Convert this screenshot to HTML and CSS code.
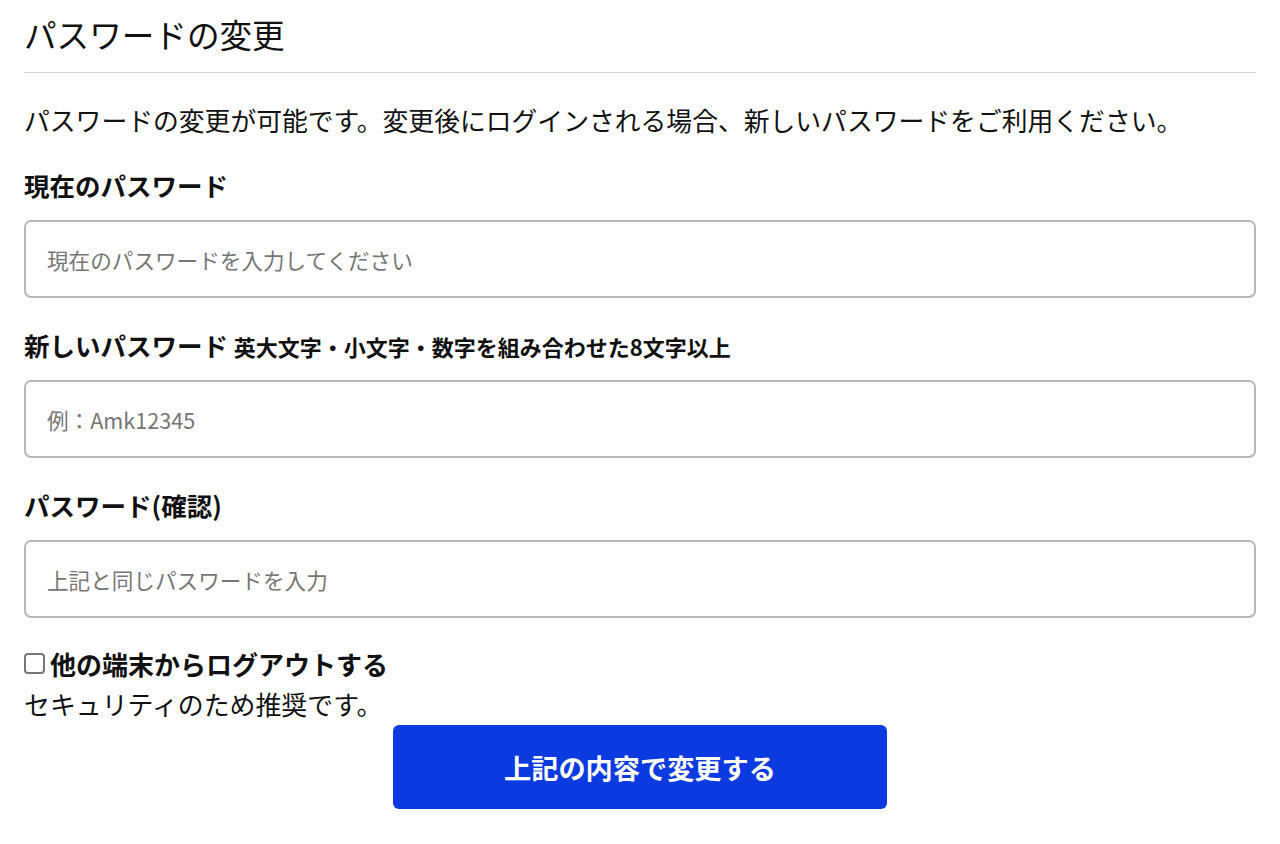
FILE: index.html
```html
<!DOCTYPE html>
<html lang="ja">
<head>
<meta charset="utf-8">
<title>パスワードの変更</title>
<link rel="stylesheet" href="styles.css">
</head>
<body>
<main class="page">
  <h1 class="title">パスワードの変更</h1>
  <p class="lead">パスワードの変更が可能です。変更後にログインされる場合、新しいパスワードをご利用ください。</p>
  <form class="form">
    <div class="field">
      <label class="label" for="current">現在のパスワード</label>
      <input class="input" id="current" type="password" placeholder="現在のパスワードを入力してください">
    </div>
    <div class="field">
      <label class="label" for="newpw">新しいパスワード <span class="hint">英大文字・小文字・数字を組み合わせた8文字以上</span></label>
      <input class="input" id="newpw" type="password" placeholder="例：Amk12345">
    </div>
    <div class="field">
      <label class="label" for="confirm">パスワード(確認)</label>
      <input class="input" id="confirm" type="password" placeholder="上記と同じパスワードを入力">
    </div>
    <div class="logout">
      <label class="check-label"><input class="check" type="checkbox">他の端末からログアウトする</label>
      <p class="note">セキュリティのため推奨です。</p>
    </div>
    <div class="actions">
      <button class="submit" type="button">上記の内容で変更する</button>
    </div>
  </form>
</main>
</body>
</html>
```

FILE: styles.css
```css
* { box-sizing: border-box; }
html, body { margin: 0; padding: 0; background: #fff; }
body {
  font-family: "Noto Sans CJK JP", "Noto Sans", sans-serif;
  color: #111;
}
.page {
  padding: 0 24px;
}
.title {
  margin: 0;
  padding: 10px 0 14px;
  font-size: 32.6px;
  line-height: 48px;
  font-weight: 400;
  border-bottom: 1.5px solid #d6d6d6;
}
.lead {
  margin: 28px 0 0;
  font-size: 25.8px;
  line-height: 38px;
  letter-spacing: 0;
}
.form {
  margin-top: 27px;
  display: flex;
  flex-direction: column;
}
.field {
  display: flex;
  flex-direction: column;
  gap: 16px;
  margin-bottom: 28px;
}
.label {
  display: block;
  height: 38px;
  font-size: 25.5px;
  line-height: 38px;
  font-weight: 700;
}
.hint {
  font-size: 22px;
  line-height: 1;
  font-weight: 700;
}
.input {
  width: 100%;
  height: 78px;
  border: 2px solid #b8b8b8;
  border-radius: 7px;
  padding: 0 21px;
  font-family: "Noto Sans CJK JP", "Noto Sans", sans-serif;
  font-size: 21.6px;
  color: #111;
  background: #fff;
}
.input::placeholder { color: #767676; }
.logout {
  margin-top: -2px;
}
.check-label {
  display: flex;
  align-items: center;
  font-size: 26px;
  line-height: 40px;
  font-weight: 700;
}
.check {
  appearance: none;
  -webkit-appearance: none;
  width: 21px;
  height: 21px;
  margin: -2px 5px 0 0;
  border: 2px solid #777;
  border-radius: 4px;
  background: #fff;
}
.note {
  margin: 0;
  font-size: 25.9px;
  line-height: 40px;
}
.actions {
  display: flex;
  justify-content: center;
  margin-top: 1px;
}
.submit {
  width: 494px;
  height: 84px;
  border: none;
  border-radius: 6px;
  background: #0a3ae0;
  color: #fff;
  font-family: "Noto Sans CJK JP", "Noto Sans", sans-serif;
  font-size: 27.2px;
  font-weight: 700;
}
```
